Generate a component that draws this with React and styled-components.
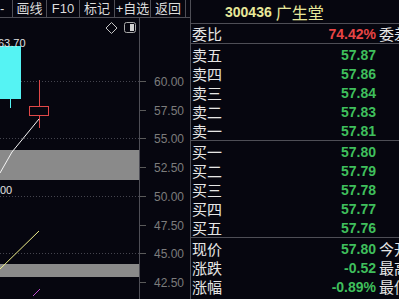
import React from "react";
import styled, { createGlobalStyle } from "styled-components";

const BG = "#06060f";
const LINE = "#4e4e56";

const GlobalStyle = createGlobalStyle`
  body {
    margin: 0;
    background: ${BG};
    overflow: hidden;
  }
`;

const Screen = styled.div`
  display: flex;
  width: 399px;
  height: 299px;
  overflow: hidden;
  background: ${BG};
`;

const LeftPane = styled.div`
  width: 190px;
  flex-shrink: 0;
  display: flex;
  flex-direction: column;
`;

const Toolbar = styled.div`
  display: flex;
  height: 17px;
  border-bottom: 1px solid ${LINE};
`;

const ToolCell = styled.div`
  width: ${({ $w }) => $w}px;
  flex-shrink: 0;
  box-sizing: border-box;
  border-right: 1px solid ${LINE};
  display: flex;
  align-items: center;
  justify-content: ${({ $left }) => ($left ? "flex-start" : "center")};
  overflow: hidden;
  color: #dcdcdc;
  font-family: "Liberation Sans", "Noto Sans CJK SC", sans-serif;
  font-size: 13px;
  line-height: 17px;
  white-space: nowrap;
`;

const ChartBox = styled.div`
  flex: 1;
  display: flex;
`;

const RightPane = styled.div`
  flex: 1;
  border-left: 1px solid ${LINE};
  display: flex;
  flex-direction: column;
  overflow: hidden;
`;

const Title = styled.div`
  height: 23px;
  border-bottom: 1px solid ${LINE};
  padding-left: 34px;
  display: flex;
  align-items: center;
  gap: 4px;
  color: #e8e89a;
  white-space: nowrap;
`;

const Code = styled.span`
  font-family: "Liberation Sans", sans-serif;
  font-weight: bold;
  font-size: 14px;
`;

const Name = styled.span`
  font-family: "Noto Sans CJK SC", sans-serif;
  font-size: 16px;
  line-height: 20px;
`;

const Section = styled.div`
  padding-top: ${({ $pt }) => $pt || 0}px;
  border-bottom: ${({ $open }) => ($open ? "none" : `1px solid ${LINE}`)};
`;

const Row = styled.div`
  display: grid;
  grid-template-columns: 40px 141px auto;
  column-gap: 3px;
  height: 19px;
  align-items: center;
  padding-left: 1px;
  white-space: nowrap;
`;

const Label = styled.span`
  font-family: "Noto Sans CJK SC", sans-serif;
  font-size: 15px;
  line-height: 19px;
  color: #e6e6e6;
`;

const Value = styled.span`
  text-align: right;
  font-family: "Liberation Sans", sans-serif;
  font-weight: bold;
  font-size: 14px;
  color: ${({ $red }) => ($red ? "#e84545" : "#3fbf5c")};
`;

const axis = ["60.00", "57.50", "55.00", "52.50", "50.00", "47.50", "45.00", "42.50"];

const sells = [
  ["卖五", "57.87"],
  ["卖四", "57.86"],
  ["卖三", "57.84"],
  ["卖二", "57.83"],
  ["卖一", "57.81"],
];

const buys = [
  ["买一", "57.80"],
  ["买二", "57.79"],
  ["买三", "57.78"],
  ["买四", "57.77"],
  ["买五", "57.76"],
];

const stats = [
  ["现价", "57.80", "今开"],
  ["涨跌", "-0.52", "最高"],
  ["涨幅", "-0.89%", "最低"],
];

const Chart = () => (
  <svg width="190" height="281" viewBox="0 18 190 281">
    <line x1="139.5" y1="18" x2="139.5" y2="299" stroke={LINE} />
    {axis.map((p, i) => {
      const y = Math.round(81 + i * 28.7) + 0.5;
      return (
        <g key={p}>
          {i % 2 === 0 && (
            <line x1="0" y1={y} x2="139" y2={y} stroke="#44444e" strokeDasharray="1 2" />
          )}
          <line x1="140" y1={y} x2="146" y2={y} stroke="#5a5a5a" />
          <text
            x="184"
            y={y + 4.5}
            textAnchor="end"
            fill="#7c7c7c"
            fontSize="12"
            fontFamily="Liberation Sans, sans-serif"
          >
            {p}
          </text>
        </g>
      );
    })}

    <polygon points="111.5,22.5 117,28 111.5,33.5 106,28" fill="none" stroke="#c4c4c4" />
    <rect x="124.5" y="22.5" width="11" height="10" rx="2" fill="none" stroke="#aaaaaa" />
    <rect x="130" y="24" width="4" height="7" fill="#d2d2d2" />

    <rect x="0" y="150" width="139" height="30" fill="#8a8a8a" />
    <rect x="0" y="264" width="139" height="13" fill="#8a8a8a" />

    <line x1="10.5" y1="98" x2="10.5" y2="108" stroke="#55f3f3" />
    <rect x="0" y="46" width="21" height="53" fill="#55f3f3" />
    <text x="-2" y="47" fill="#e0e0e0" fontSize="11" fontFamily="Liberation Sans, sans-serif">
      63.70
    </text>

    <line x1="39.5" y1="80" x2="39.5" y2="106" stroke="#e04848" />
    <line x1="39.5" y1="116" x2="39.5" y2="128" stroke="#e04848" />
    <rect x="29.5" y="106.5" width="19" height="9" fill="none" stroke="#e04848" />

    <polyline points="0,173 12,152 39,119" fill="none" stroke="#f4f4f4" />
    <text x="0" y="194" fill="#e0e0e0" fontSize="11" fontFamily="Liberation Sans, sans-serif">
      00
    </text>

    <line x1="0" y1="269" x2="39" y2="231" stroke="#eeee8a" />
    <line x1="33" y1="296" x2="40" y2="289" stroke="#c050d0" />
  </svg>
);

const App = () => (
  <Screen>
    <GlobalStyle />
    <LeftPane>
      <Toolbar>
        <ToolCell $w={13} $left>-</ToolCell>
        <ToolCell $w={34}>画线</ToolCell>
        <ToolCell $w={33}>F10</ToolCell>
        <ToolCell $w={35}>标记</ToolCell>
        <ToolCell $w={36}>+自选</ToolCell>
        <ToolCell $w={35}>返回</ToolCell>
      </Toolbar>
      <ChartBox>
        <Chart />
      </ChartBox>
    </LeftPane>

    <RightPane>
      <Title>
        <Code>300436</Code>
        <Name>广生堂</Name>
      </Title>
      <Section>
        <Row>
          <Label>委比</Label>
          <Value $red>74.42%</Value>
          <Label>委差</Label>
        </Row>
      </Section>
      <Section $pt={1}>
        {sells.map(([l, v]) => (
          <Row key={l}>
            <Label>{l}</Label>
            <Value>{v}</Value>
          </Row>
        ))}
      </Section>
      <Section $pt={1}>
        {buys.map(([l, v]) => (
          <Row key={l}>
            <Label>{l}</Label>
            <Value>{v}</Value>
          </Row>
        ))}
      </Section>
      <Section $pt={1} $open>
        {stats.map(([l, v, r]) => (
          <Row key={l}>
            <Label>{l}</Label>
            <Value>{v}</Value>
            <Label>{r}</Label>
          </Row>
        ))}
      </Section>
    </RightPane>
  </Screen>
);

export default App;
